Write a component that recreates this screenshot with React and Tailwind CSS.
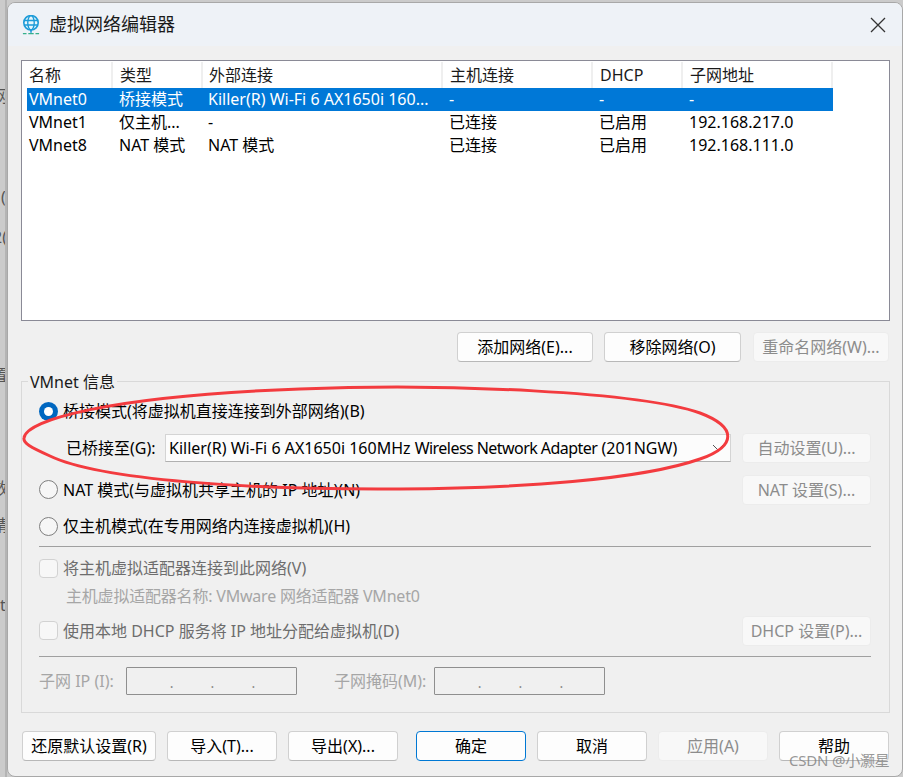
const font = { fontFamily: '"Noto Sans", "Noto Sans CJK SC", sans-serif' };

const columns = [
  { name: "名称", width: "w-[85px]", pad: "pl-[2px]" },
  { name: "类型", width: "w-[90px]", pad: "pl-[7px]" },
  { name: "外部连接", width: "w-[240px]", pad: "pl-[6px]" },
  { name: "主机连接", width: "w-[150px]", pad: "pl-[7px]" },
  { name: "DHCP", width: "w-[90px]", pad: "pl-[7px]" },
  { name: "子网地址", width: "w-[150px]", pad: "pl-[7px]" },
];

const rows = [
  ["VMnet0", "桥接模式", "Killer(R) Wi-Fi 6 AX1650i 160...", "-", "-", "-"],
  ["VMnet1", "仅主机...", "-", "已连接", "已启用", "192.168.217.0"],
  ["VMnet8", "NAT 模式", "NAT 模式", "已连接", "已启用", "192.168.111.0"],
];

const sideText = [
  ["网", "mt-[86px] -ml-[8px]"],
  ["(", "mt-[81px] ml-px"],
  ["2(", "mt-[20px] -ml-[7px]"],
  ["置", "mt-[118px] -ml-[8px]"],
  ["数", "mt-[93px] -ml-[8px]"],
  ["精", "mt-[17px] -ml-[8px]"],
  ["t", "mt-[60px] ml-0"],
];

const GlobeIcon = () => (
  <svg width="18" height="20" viewBox="0 0 20 22" fill="none">
    <circle cx="10" cy="8.5" r="8" fill="#e6f6fc" stroke="#1d9bd8" strokeWidth="1.8" />
    <ellipse cx="10" cy="8.5" rx="3.6" ry="8" stroke="#1d9bd8" strokeWidth="1.5" />
    <path d="M2.2 6h15.6M2.2 11h15.6" stroke="#1d9bd8" strokeWidth="1.5" />
    <path d="M10 16.5v3" stroke="#1d9bd8" strokeWidth="1.8" />
    <path d="M1 20.5h4M7 20.5h6M15 20.5h4" stroke="#35b08c" strokeWidth="1.5" />
  </svg>
);

const Button = ({ children, width = "w-[110px]", disabled, primary }) => (
  <button
    className={
      width +
      " h-[30px] shrink-0 rounded-[4px] border text-[16px] leading-none " +
      (disabled
        ? "bg-[#f8f8f8] border-[#ececec] text-[#8c8c8c]"
        : primary
          ? "bg-[#fdfdfd] border-[#0078d4] text-black"
          : "bg-[#fdfdfd] border-[#d0d0d0] border-b-[#b8b8b8] text-black")
    }
  >
    {children}
  </button>
);

const Radio = ({ checked }) =>
  checked ? (
    <span className="size-[19px] shrink-0 rounded-full bg-[#0067c0] flex items-center justify-center">
      <span className="size-[9px] rounded-full bg-white" />
    </span>
  ) : (
    <span className="size-[19px] shrink-0 rounded-full border border-[#7f7f7f] bg-[#f6f6f6]" />
  );

const Checkbox = () => (
  <span className="size-[19px] shrink-0 rounded-[4px] border border-[#d2d2d2] bg-[#f7f7f7]" />
);

const IpInput = () => (
  <div className="w-[171px] h-[28px] shrink-0 border border-[#8f8f8f] rounded-[1px] flex justify-center gap-[37px] pl-[2px] text-[#8a8a8a] text-[14px] leading-[30px]">
    <span>.</span>
    <span>.</span>
    <span>.</span>
  </div>
);

const App = () => {
  return (
    <div className="relative w-[903px] h-[777px] overflow-hidden flex bg-[#cbcbcb]" style={font}>
      <div className="w-[7px] shrink-0 flex flex-col overflow-hidden border-r-2 border-[#b4b4b4] text-[16px] leading-[20px] text-[#555]">
        {sideText.map(([text, margin]) => (
          <span key={margin} className={margin + " h-[20px] whitespace-nowrap"}>
            {text}
          </span>
        ))}
      </div>

      <div className="mt-[2px] w-[896px] h-[775px] shrink-0 rounded-[8px] border border-[#a8a8a8] bg-[#f0f0f0] overflow-hidden">
        <div className="h-[43px] bg-[#eef2f7] flex items-center justify-between pl-[14px] pr-[16px]">
          <div className="flex items-center gap-[9px]">
            <GlobeIcon />
            <span className="text-[18px] text-[#1a1a1a]">虚拟网络编辑器</span>
          </div>
          <svg width="16" height="16" viewBox="0 0 16 16" fill="none" stroke="#333" strokeWidth="1.3">
            <path d="M1 1l14 14M15 1L1 15" />
          </svg>
        </div>

        <div className="ml-[13px] mt-[14px] w-[869px] h-[261px] border border-[#8a8a96] bg-white">
          <div className="flex h-[26px] mt-px text-[16px] leading-[26px] text-[#1a1a1a]">
            <div className="w-[91px] border-r-2 border-[#efefef] pl-[7px]">{columns[0].name}</div>
            {columns.slice(1).map((col) => (
              <div key={col.name} className={col.width + " " + col.pad + " border-r-2 border-[#efefef]"}>
                {col.name}
              </div>
            ))}
          </div>
          {rows.map((row, i) => (
            <div
              key={row[0]}
              className={
                "ml-[5px] w-[806px] h-[23px] flex text-[16px] leading-[23px] whitespace-nowrap " +
                (i === 0 ? "bg-[#0078d7] text-white" : "text-black")
              }
            >
              {row.map((cell, j) => (
                <div key={j} className={columns[j].width + " " + columns[j].pad}>
                  {cell}
                </div>
              ))}
            </div>
          ))}
        </div>

        <div className="mt-[11px] ml-[449px] flex">
          <Button width="w-[136px]">添加网络(E)...</Button>
          <div className="ml-[11px]">
            <Button width="w-[137px]">移除网络(O)</Button>
          </div>
          <div className="ml-[12px]">
            <Button width="w-[136px]" disabled>
              重命名网络(W)...
            </Button>
          </div>
        </div>

        <div className="relative ml-[13px] mt-[19px] w-[869px] h-[332px] border border-[#d9d9d9] pl-[17px] text-[16px] leading-[20px] text-black">
          <span className="absolute left-[6px] -top-[10px] bg-[#f0f0f0] px-[2px] text-[#1a1a1a]">VMnet 信息</span>

          <div className="mt-[19px] h-[20px] flex items-center gap-[5px]">
            <Radio checked />
            <span>桥接模式(将虚拟机直接连接到外部网络)(B)</span>
          </div>

          <div className="mt-[12px] h-[29px] flex items-center">
            <span className="ml-[27px] w-[99px] shrink-0">已桥接至(G):</span>
            <div className="w-[566px] h-[28px] shrink-0 border border-[#d4d4d4] border-b-[#b0b0b0] bg-[#fcfcfc] flex items-center justify-between pl-[3px] pr-[6px] whitespace-nowrap">
              <span>
                Killer(R) Wi-Fi 6 AX1650i 160MHz <span className="tracking-[-0.55px]">Wireless Network Adapter</span>{" "}
                (201NGW)
              </span>
              <svg width="12" height="8" viewBox="0 0 12 8" fill="none" stroke="#555" strokeWidth="1">
                <path d="M1 1l5 5 5-5" />
              </svg>
            </div>
            <div className="ml-[11px]">
              <Button width="w-[129px]" disabled>
                自动设置(U)...
              </Button>
            </div>
          </div>

          <div className="mt-[13px] w-[832px] h-[29px] flex items-center">
            <Radio />
            <span className="ml-[5px] grow">NAT 模式(与虚拟机共享主机的 IP 地址)(N)</span>
            <Button width="w-[129px]" disabled>
              NAT 设置(S)...
            </Button>
          </div>

          <div className="mt-[12px] h-[20px] flex items-center gap-[5px]">
            <Radio />
            <span>仅主机模式(在专用网络内连接虚拟机)(H)</span>
          </div>

          <div className="mt-[10px] w-[832px] h-px bg-[#a0a0a0]" />

          <div className="mt-[11px] h-[20px] flex items-center gap-[5px] text-[#6d6d6d]">
            <Checkbox />
            <span>将主机虚拟适配器连接到此网络(V)</span>
          </div>

          <div className="mt-[8px] ml-[27px] h-[20px] tracking-[-0.2px] text-[#a6a6a6]">
            主机虚拟适配器名称: VMware 网络适配器 VMnet0
          </div>

          <div className="mt-[10px] w-[832px] h-[29px] flex items-center text-[#6d6d6d]">
            <Checkbox />
            <span className="ml-[5px] grow">使用本地 DHCP 服务将 IP 地址分配给虚拟机(D)</span>
            <Button width="w-[129px]" disabled>
              DHCP 设置(P)...
            </Button>
          </div>

          <div className="mt-[11px] w-[832px] h-px bg-[#a0a0a0]" />

          <div className="mt-[10px] h-[28px] flex items-center text-[#a6a6a6]">
            <span className="w-[87px] shrink-0">子网 IP (I):</span>
            <IpInput />
            <span className="ml-[37px] w-[100px] shrink-0">子网掩码(M):</span>
            <IpInput />
          </div>
        </div>

        <div className="mt-[18px] ml-[14px] flex">
          <Button width="w-[134px]">还原默认设置(R)</Button>
          <div className="ml-[11px]">
            <Button>导入(T)...</Button>
          </div>
          <div className="ml-[11px]">
            <Button>导出(X)...</Button>
          </div>
          <div className="ml-[18px]">
            <Button primary>确定</Button>
          </div>
          <div className="ml-[11px]">
            <Button>取消</Button>
          </div>
          <div className="ml-[11px]">
            <Button disabled>应用(A)</Button>
          </div>
          <div className="ml-[11px]">
            <Button>帮助</Button>
          </div>
        </div>
      </div>

      {/* red circle drawn on top of the screenshot */}
      <svg className="absolute left-0 top-0 pointer-events-none" width="903" height="777" fill="none">
        <path
          d="M24 438C26 420 110 396 300 389C450 383 640 392 700 413C737 427 737 446 700 459C640 480 520 488 400 489C250 490 100 480 50 456C30 447 23 443 24 438Z"
          stroke="#f33b3f"
          strokeWidth="3"
        />
      </svg>

      <span className="absolute left-[789px] top-[750px] text-[15px] leading-[20px] tracking-[-0.2px] text-[#7d7d7d]/80">
        CSDN @小灏星
      </span>
    </div>
  );
};

export default App;
